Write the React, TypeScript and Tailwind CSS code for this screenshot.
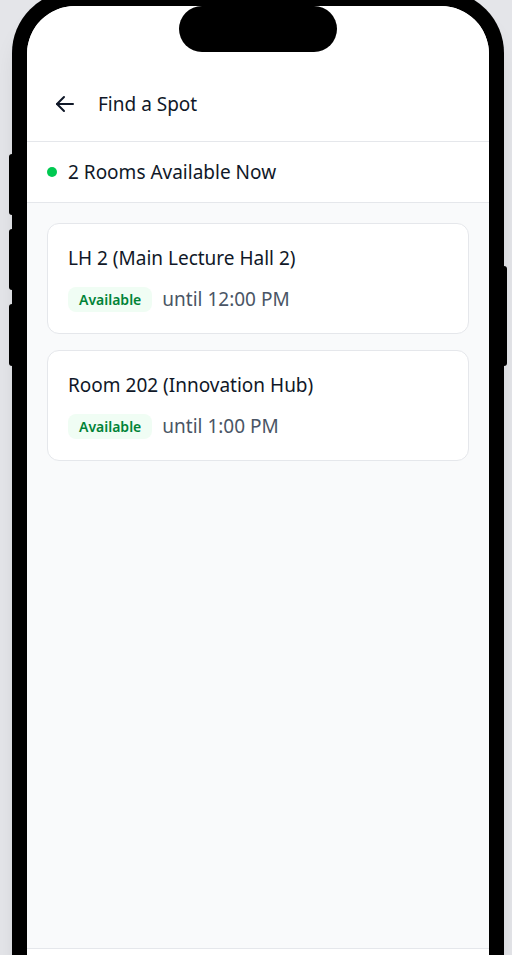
import React from "react";

const rooms = [
  { name: "LH 2 (Main Lecture Hall 2)", until: "12:00 PM" },
  { name: "Room 202 (Innovation Hub)", until: "1:00 PM" },
];

const RoomCard = ({ name, until }: { name: string; until: string }) => {
  return (
    <div className="rounded-xl border border-gray-200 bg-white px-5 pt-5 pb-5">
      <p className="text-[19px] leading-7 text-gray-900">{name}</p>
      <div className="mt-[13px] flex items-center gap-[10px]">
        <span className="rounded-lg bg-green-50 px-[11px] py-[3px] text-[14px] leading-[19px] font-semibold text-green-700">
          Available
        </span>
        <span className="text-[19px] leading-7 text-gray-600">until {until}</span>
      </div>
    </div>
  );
};

const App = () => {
  return (
    <div
      className="h-[955px] overflow-hidden bg-[#e4e5e9]"
      style={{ fontFamily: '"Noto Sans", "Open Sans", sans-serif' }}
    >
      <div className="relative mt-[-9px] ml-[12px] w-[492px] rounded-[62px] bg-black p-[15px] shadow-xl">
        {/* side buttons */}
        <div className="absolute top-[163px] left-[-3px] h-[61px] w-[3px] rounded-l-sm bg-black" />
        <div className="absolute top-[238px] left-[-3px] h-[61px] w-[3px] rounded-l-sm bg-black" />
        <div className="absolute top-[313px] left-[-3px] h-[62px] w-[3px] rounded-l-sm bg-black" />
        <div className="absolute top-[275px] right-[-3px] h-[100px] w-[3px] rounded-r-sm bg-black" />

        <div className="relative flex h-[1022px] flex-col overflow-hidden rounded-[48px] bg-white">
          {/* dynamic island */}
          <div className="absolute top-0 left-1/2 h-[46px] w-[158px] -translate-x-1/2 rounded-full bg-black" />

          <header className="flex items-center border-b border-gray-200 bg-white pt-[84px] pb-[23px] pl-[24px]">
            <button className="flex h-7 w-7 items-center justify-center text-gray-900">
              <svg
                width="24"
                height="24"
                viewBox="0 0 24 24"
                fill="none"
                stroke="currentColor"
                strokeWidth="2"
                strokeLinecap="round"
                strokeLinejoin="round"
              >
                <path d="M20 12H4" />
                <path d="M11 19l-7-7 7-7" />
              </svg>
            </button>
            <h1 className="ml-[19px] text-[19px] leading-7 text-gray-900">Find a Spot</h1>
          </header>

          <div className="flex items-center gap-[11px] border-b border-gray-200 bg-white py-4 pl-5">
            <span className="h-[10px] w-[10px] rounded-full bg-green-500" />
            <span className="text-[19px] leading-7 text-gray-900">2 Rooms Available Now</span>
          </div>

          <main className="flex flex-1 flex-col gap-4 bg-gray-50 p-5">
            {rooms.map((r) => (
              <RoomCard key={r.name} name={r.name} until={r.until} />
            ))}
          </main>

          <nav className="h-[80px] border-t border-gray-200 bg-white" />
        </div>
      </div>
    </div>
  );
};

export default App;
